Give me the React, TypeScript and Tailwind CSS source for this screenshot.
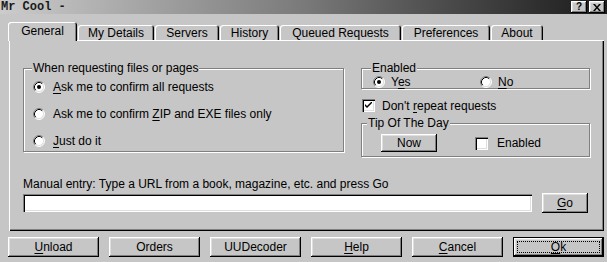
import React from "react";

const raised =
  "shadow-[inset_-1px_-1px_0_#000,inset_1px_1px_0_#fff,inset_-2px_-2px_0_#808080,inset_2px_2px_0_#dfdfdf]";
const sunken =
  "shadow-[inset_1px_1px_0_#808080,inset_2px_2px_0_#000,inset_-1px_-1px_0_#fff,inset_-2px_-2px_0_#dfdfdf]";

function Radio({ checked }: { checked?: boolean }) {
  return (
    <svg width="12" height="12" viewBox="0 0 12 12" className="shrink-0">
      <circle cx="6" cy="6" r="5" fill="#fff" />
      <path d="M9.89 2.11 A5.5 5.5 0 0 0 2.11 9.89" stroke="#808080" fill="none" strokeWidth="1" />
      <path d="M2.11 9.89 A5.5 5.5 0 0 0 9.89 2.11" stroke="#fff" fill="none" strokeWidth="1" />
      <path d="M9.18 2.82 A4.5 4.5 0 0 0 2.82 9.18" stroke="#000" fill="none" strokeWidth="1" />
      <path d="M2.82 9.18 A4.5 4.5 0 0 0 9.18 2.82" stroke="#dfdfdf" fill="none" strokeWidth="1" />
      {checked && <circle cx="6" cy="6" r="2" fill="#000" />}
    </svg>
  );
}

function Check({ checked }: { checked?: boolean }) {
  return (
    <div className={`w-[13px] h-[13px] bg-white shrink-0 flex items-center justify-center ${sunken}`}>
      {checked && (
        <svg width="7" height="7" viewBox="0 0 7 7">
          <path d="M0 2 L0 4 L2 6 L7 1 L7 -1 L2 4 Z" fill="#000" />
        </svg>
      )}
    </div>
  );
}

function U({ children }: { children: React.ReactNode }) {
  return <span className="underline underline-offset-[2px] decoration-[1px]">{children}</span>;
}

function Tab({ label, w, selected }: { label: string; w: string; selected?: boolean }) {
  return (
    <div
      className={`${w} ${
        selected ? "h-[19px] -mb-[1px] z-10" : "h-[15px]"
      } relative bg-[#c6c6c6] rounded-t-[3px] flex items-center justify-center leading-[14px] text-[12px] shadow-[inset_1px_1px_0_#fff,inset_-1px_0_0_#000,inset_-2px_0_0_#808080]`}
    >
      <span className={selected ? "-mt-[2px]" : ""}>{label}</span>
    </div>
  );
}

function Btn({ children, className = "", def }: { children: React.ReactNode; className?: string; def?: boolean }) {
  if (def) {
    return (
      <div className={`border border-black ${className}`}>
        <div className={`w-full h-full flex items-center justify-center p-[3px] ${raised}`}>
          <div className="w-full h-full border border-dotted border-black flex items-center justify-center leading-[12px]">
            {children}
          </div>
        </div>
      </div>
    );
  }
  return <div className={`flex items-center justify-center ${raised} ${className}`}>{children}</div>;
}

export default function App() {
  return (
    <div className="w-[607px] h-[262px] bg-[#c6c6c6] flex flex-col overflow-hidden text-black font-['Liberation_Sans',Arial,sans-serif] text-[12px] leading-[14px]">
      {/* Title bar */}
      <div className="h-[14px] flex items-center justify-between bg-linear-to-r from-[#cccccc] via-[#7a7a7a] to-[#1c1c1c]">
        <span className="pl-[1px] font-['Liberation_Mono',monospace] font-semibold text-[12px] leading-[14px] text-[#1a1a1a]">
          Mr Cool -
        </span>
        <div className="flex gap-[2px] pr-[2px] h-[12px]">
          <div className={`w-[16px] h-[12px] bg-[#c6c6c6] flex items-center justify-center text-[10px] font-bold leading-none ${raised}`}>
            ?
          </div>
          <div className={`w-[16px] h-[12px] bg-[#c6c6c6] flex items-center justify-center ${raised}`}>
            <svg width="8" height="7" viewBox="0 0 8 7">
              <path d="M0 0 L2 0 L4 2.5 L6 0 L8 0 L5 3.5 L8 7 L6 7 L4 4.5 L2 7 L0 7 L3 3.5 Z" fill="#000" />
            </svg>
          </div>
        </div>
      </div>

      {/* Tabs */}
      <div className="mt-[8px] flex items-end gap-[1px] pl-[8px]">
        <Tab label="General" w="w-[69px]" selected />
        <Tab label="My Details" w="w-[76px]" />
        <Tab label="Servers" w="w-[64px]" />
        <Tab label="History" w="w-[59px]" />
        <Tab label="Queued Requests" w="w-[121px]" />
        <Tab label="Preferences" w="w-[88px]" />
        <Tab label="About" w="w-[52px]" />
      </div>

      {/* Panel */}
      <div className="ml-[9px] w-[595px] h-[191px] flex flex-col pl-[14px] pt-[21px] shadow-[inset_1px_1px_0_#fff,inset_-1px_-1px_0_#000,inset_-2px_-2px_0_#808080]">
        <div className="flex items-start">
          {/* Left group */}
          <fieldset className="w-[321px] border border-[#808080] pl-[9px] pt-[4px] pb-[2px] shadow-[inset_1px_1px_0_#fff,1px_1px_0_#fff]">
            <legend className="px-[1px] -ml-[1px] leading-[14px] bg-[#c6c6c6]">When requesting files or pages</legend>
            <div className="flex flex-col gap-[11px]">
              <div className="flex items-center gap-[8px] h-[16px]">
                <Radio checked />
                <span>
                  <U>A</U>sk me to confirm all requests
                </span>
              </div>
              <div className="flex items-center gap-[8px] h-[16px]">
                <Radio />
                <span>
                  Ask me to confirm <U>Z</U>IP and EXE files only
                </span>
              </div>
              <div className="flex items-center gap-[8px] h-[16px]">
                <Radio />
                <span>
                  <U>J</U>ust do it
                </span>
              </div>
            </div>
          </fieldset>

          {/* Right column */}
          <div className="ml-[17px] w-[229px] flex flex-col mt-[1px]">
            <fieldset className="border border-[#808080] pl-[11px] pt-[2px] shadow-[inset_1px_1px_0_#fff,1px_1px_0_#fff]">
              <legend className="px-[1px] -ml-[2px] leading-[12px] bg-[#c6c6c6]">Enabled</legend>
              <div className="flex items-center h-[12px] leading-[12px]">
                <div className="flex items-center gap-[6px] w-[107px]">
                  <Radio checked />
                  <span className="leading-[12px]">
                    Y<U>e</U>s
                  </span>
                </div>
                <div className="flex items-center gap-[6px]">
                  <Radio />
                  <span className="leading-[12px]">
                    <U>N</U>o
                  </span>
                </div>
              </div>
            </fieldset>

            <div className="mt-[10px] flex items-center gap-[7px] h-[13px] pl-[1px]">
              <Check checked />
              <span>
                Don't <U>r</U>epeat requests
              </span>
            </div>

            <fieldset className="mt-[4px] border border-[#808080] pl-[19px] pt-[4px] pb-[4px] shadow-[inset_1px_1px_0_#fff,1px_1px_0_#fff]">
              <legend className="px-[1px] -ml-[14px] leading-[14px] bg-[#c6c6c6]">Tip Of The Day</legend>
              <div className="flex items-center">
                <Btn className="w-[56px] h-[18px]">Now</Btn>
                <div className="ml-[38px] flex items-center gap-[9px]">
                  <Check />
                  <span>Enabled</span>
                </div>
              </div>
            </fieldset>
          </div>
        </div>

        <div className="mt-[20px] leading-[14px]">Manual entry: Type a URL from a book, magazine, etc. and press Go</div>
        <div className="mt-[2px] flex items-center">
          <div className={`w-[509px] h-[18px] bg-white ${sunken}`} />
          <Btn className="ml-[10px] w-[46px] h-[20px]">
            <U>G</U>o
          </Btn>
        </div>
      </div>

      {/* Bottom buttons */}
      <div className="mt-[6px] pl-[8px] flex gap-[10px]">
        <Btn className="w-[91px] h-[20px]">
          <U>U</U>nload
        </Btn>
        <Btn className="w-[91px] h-[20px]">Orders</Btn>
        <Btn className="w-[91px] h-[20px]">UUDecoder</Btn>
        <Btn className="w-[91px] h-[20px]">
          <U>H</U>elp
        </Btn>
        <Btn className="w-[91px] h-[20px]">
          <U>C</U>ancel
        </Btn>
        <Btn def className="w-[91px] h-[20px]">
          <U>O</U>k
        </Btn>
      </div>
    </div>
  );
}
